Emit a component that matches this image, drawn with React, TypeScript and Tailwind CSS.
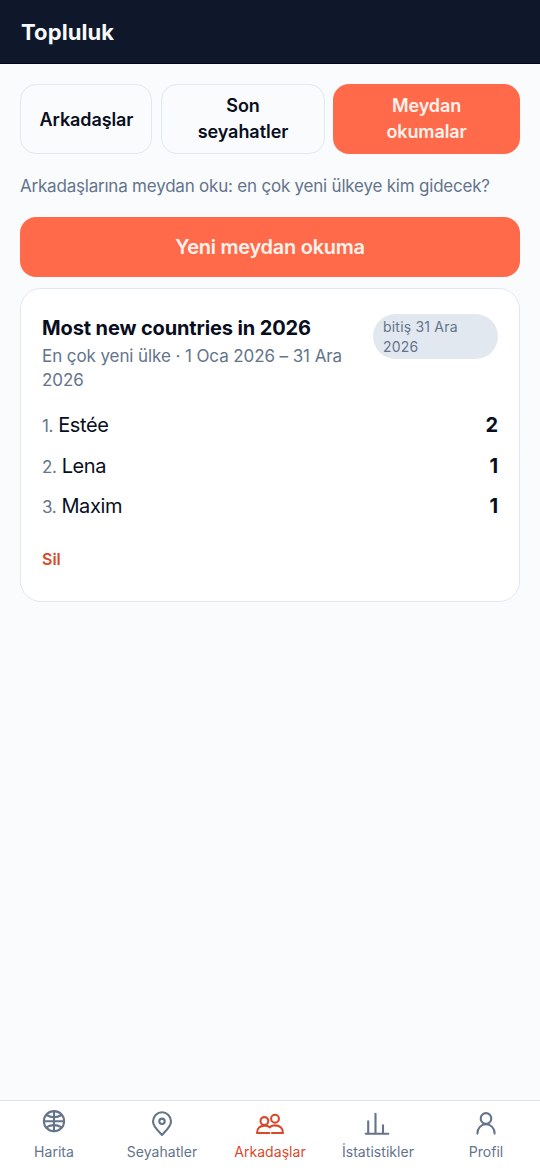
import React from "react";
import type { FC, ReactNode } from "react";

type Entry = { name: string; score: number };

const entries: Entry[] = [
  { name: "Estée", score: 2 },
  { name: "Lena", score: 1 },
  { name: "Maxim", score: 1 },
];

type IconProps = { children: ReactNode };

const Icon: FC<IconProps> = ({ children }) => (
  <svg
    width="32"
    height="28"
    viewBox="0 0 32 28"
    fill="none"
    stroke="currentColor"
    strokeWidth="2.1"
    strokeLinecap="round"
    strokeLinejoin="round"
  >
    {children}
  </svg>
);

const GlobeIcon = () => (
  <Icon>
    <circle cx="16" cy="12.2" r="10.1" />
    <path d="M16 2.2v20M6 12.2h20" />
    <path d="M8.4 6c4.6 2.7 10.6 2.7 15.2 0M8.4 18.4c4.6-2.7 10.6-2.7 15.2 0" />
  </Icon>
);

const PinIcon = () => (
  <Icon>
    <path d="M16 26c-1.6-2.1-9-7.7-9-13.7a9 9 0 0 1 18 0c0 6-7.4 11.6-9 13.7z" />
    <circle cx="16" cy="12.3" r="2.7" />
  </Icon>
);

const FriendsIcon = () => (
  <Icon>
    <circle cx="10.4" cy="12" r="3.9" />
    <circle cx="21" cy="9.7" r="3.9" />
    <path d="M15.4 24H3c0-4.8 3-7.4 7.6-7.4 2.2 0 4 .6 5.2 1.7" />
    <path d="M18 24h11c0-5-3.4-7.6-8-7.6-2 0-3.8.5-5.2 1.7" />
  </Icon>
);

const StatsIcon = () => (
  <Icon>
    <path d="M3.7 24.7h22.6M6.2 24V12.3M13.5 24V4.8M21 24v-7.8" />
  </Icon>
);

const ProfileIcon = () => (
  <Icon>
    <circle cx="16" cy="9.4" r="5.3" />
    <path d="M7.4 24.6c0-5.6 3.7-9.3 8.6-9.3s8.6 3.7 8.6 9.3" />
  </Icon>
);

const navItems = [
  { label: "Harita", icon: <GlobeIcon />, active: false },
  { label: "Seyahatler", icon: <PinIcon />, active: false },
  { label: "Arkadaşlar", icon: <FriendsIcon />, active: true },
  { label: "İstatistikler", icon: <StatsIcon />, active: false },
  { label: "Profil", icon: <ProfileIcon />, active: false },
];

const Tabs = () => (
  <div className="flex h-[70px] text-[18px] leading-[26px] font-semibold">
    <button className="w-[132px] shrink-0 rounded-2xl border border-[#e2e8f0] pt-px pl-px tracking-[-0.1px]">
      Arkadaşlar
    </button>
    <button className="ml-[9px] w-[164px] shrink-0 rounded-2xl border border-[#e2e8f0] tracking-[-0.05px]">
      Son
      <br />
      seyahatler
    </button>
    <button className="ml-2 flex-1 rounded-2xl bg-[#ff6b4a] text-[#fff3ee] tracking-[-0.1px]">
      Meydan
      <br />
      okumalar
    </button>
  </div>
);

const ChallengeCard = () => (
  <section className="mt-[11px] h-[314px] rounded-[21px] border border-[#e2e8f0] bg-white px-[21px] pt-[25px]">
    <div className="flex items-start justify-between">
      <div className="w-[310px]">
        <h2 className="pb-px text-[20px] leading-[29px] font-bold tracking-[-0.12px]">
          Most new countries in 2026
        </h2>
        <p className="text-[17px] leading-6 tracking-[-0.09px] text-[#64748b]">
          En çok yeni ülke · 1 Oca 2026 – 31 Ara
          <br />
          2026
        </p>
      </div>
      <span className="h-[45px] w-[125px] rounded-full bg-[#e2e8f0] px-2.5 pt-[3px] text-[14px] leading-5 tracking-[0.2px] text-[#64748b]">
        bitiş 31 Ara
        <br />
        2026
      </span>
    </div>
    <ol className="mt-[13px]">
      {entries.map((entry, index) => (
        <li
          key={entry.name}
          className="flex h-[40.6px] items-center justify-between text-[20px]"
        >
          <span className="tracking-[-0.4px]">
            <span className="text-[17px] text-[#64748b]">{index + 1}.</span>{" "}
            {entry.name}
          </span>
          <span className="font-bold">{entry.score}</span>
        </li>
      ))}
    </ol>
    <button className="mt-5 block text-[16px] leading-6 font-semibold text-[#d9482b]">
      Sil
    </button>
  </section>
);

export default function App() {
  return (
    <div className="flex h-[1170px] w-[540px] flex-col bg-[#f9fbfd] font-['Inter',sans-serif] text-[#080e20]">
      <header className="flex h-16 shrink-0 items-center border-b border-[#020617] bg-[#0f172a] px-[21px]">
        <h1 className="text-[22px] leading-8 font-bold tracking-[0.1px] text-[#f8fafc]">
          Topluluk
        </h1>
      </header>
      <main className="flex-1 px-5 pt-5">
        <Tabs />
        <p className="mt-5 whitespace-nowrap text-[17px] leading-6 tracking-[-0.21px] text-[#64748b]">
          Arkadaşlarına meydan oku: en çok yeni ülkeye kim gidecek?
        </p>
        <button className="mt-[19px] block h-[60px] w-full rounded-2xl bg-[#ff6b4a] pb-px text-[20px] font-semibold tracking-[-0.27px] text-[#fff3ee]">
          Yeni meydan okuma
        </button>
        <ChallengeCard />
      </main>
      <nav className="grid h-[70px] shrink-0 grid-cols-5 border-t border-[#dfe3e9] bg-white">
        {navItems.map((item) => (
          <div
            key={item.label}
            className={
              item.active
                ? "flex flex-col items-center pt-2 text-[#d9482b]"
                : "flex flex-col items-center pt-2 text-[#64748b]"
            }
          >
            {item.icon}
            <span className="mt-[5px] text-[14px] leading-5 tracking-[0.05px]">
              {item.label}
            </span>
          </div>
        ))}
      </nav>
    </div>
  );
}
